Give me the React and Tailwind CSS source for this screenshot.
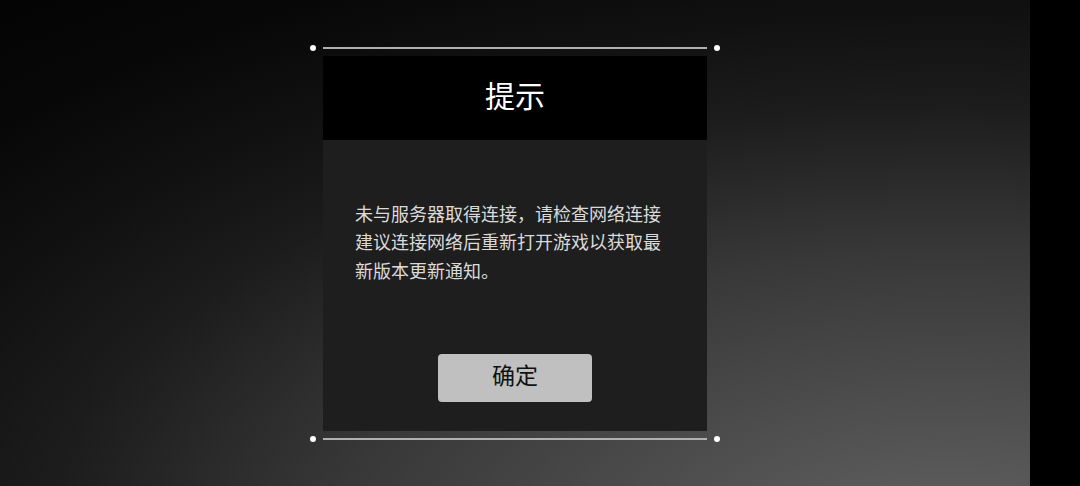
export default function App() {
  const font = { fontFamily: '"Noto Sans CJK SC", "Noto Sans", sans-serif' };
  return (
    <div className="flex w-[1080px] h-[486px] overflow-hidden" style={font}>
      <div className="w-[1030px] h-full flex items-center justify-center bg-[#050505] bg-[radial-gradient(1470px_735px_at_950px_560px,#666666_0%,#5a5a5a_10%,#383838_42%,#1c1c1c_62%,#111111_74%,#070707_88%,#040404_100%)]">
        <div className="flex flex-col items-center gap-[5px]">
          <div className="w-[410px] h-[6px] flex items-center justify-between">
            <div className="w-[6px] h-[6px] rounded-full bg-white" />
            <div className="w-[384px] h-[2px] bg-[#b0b0b0]" />
            <div className="w-[6px] h-[6px] rounded-full bg-white" />
          </div>
          <div className="w-[384px] h-[375px] flex flex-col">
            <div className="h-[84px] bg-black flex items-center justify-center pb-[8px] text-white text-[30px] leading-none">
              提示
            </div>
            <div className="flex-1 bg-[#1e1e1e] flex flex-col pt-[59px] pl-[32px]">
              <div className="text-[18px] leading-[28.5px] text-[#dadada] whitespace-nowrap">
                <div>未与服务器取得连接，请检查网络连接</div>
                <div>建议连接网络后重新打开游戏以获取最</div>
                <div>新版本更新通知。</div>
              </div>
            </div>
            <div className="bg-[#1e1e1e] flex justify-center pb-[29px]">
              <div className="w-[154px] h-[48px] rounded-[4px] bg-[#c0c0c0] flex items-center justify-center pb-[6px] text-[23px] leading-none text-[#111]">
                确定
              </div>
            </div>
          </div>
          <div className="w-[410px] h-[6px] flex items-center justify-between">
            <div className="w-[6px] h-[6px] rounded-full bg-white" />
            <div className="w-[384px] h-[2px] bg-[#b0b0b0]" />
            <div className="w-[6px] h-[6px] rounded-full bg-white" />
          </div>
        </div>
      </div>
      <div className="w-[50px] h-full bg-black" />
    </div>
  );
}
